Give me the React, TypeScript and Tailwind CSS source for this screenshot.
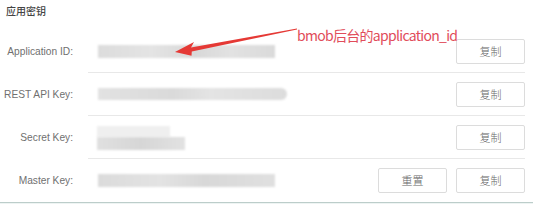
import React from "react";

const cjk = '"Noto Sans CJK SC", "Liberation Sans", sans-serif';

function Btn({ children }: { children: React.ReactNode }) {
  return (
    <button
      className="w-[69px] h-[25px] border border-[#dcdcdc] rounded-[2px] bg-white text-[11px] font-light text-[#666] leading-none flex items-center justify-center"
      style={{ fontFamily: cjk }}
    >
      {children}
    </button>
  );
}

function Row({
  label,
  bar,
  last,
  buttons,
}: {
  label: string;
  bar: React.ReactNode;
  last?: boolean;
  buttons: React.ReactNode;
}) {
  return (
    <div className="flex h-[43px]">
      <div className="w-[88px] shrink-0 flex items-center justify-end pr-[15px] text-[10.2px] text-[#707070] font-['Liberation_Sans',sans-serif]">
        {label}
      </div>
      <div
        className={
          "flex-1 mr-[8px] flex items-center " +
          (last ? "" : "border-b border-[#e8e8e8]")
        }
      >
        <div className="pl-[10px] flex-1">{bar}</div>
        <div className="flex gap-[9px]">{buttons}</div>
      </div>
    </div>
  );
}

export default function App() {
  return (
    <div className="relative w-[533px] h-[204px] bg-white overflow-hidden">
      <div
        className="h-[30px] pl-[6px] pt-[3px] text-[10px] font-medium text-[#444]"
        style={{ fontFamily: cjk }}
      >
        应用密钥
      </div>
      <Row
        label="Application ID:"
        bar={
          <div className="w-[177px] h-[13px] blur-[1px] bg-[linear-gradient(90deg,#dcdcdc_0%,#e4e4e4_30%,#d8d8d8_55%,#e2e2e2_75%,#dadada_100%)]" />
        }
        buttons={<Btn>复制</Btn>}
      />
      <Row
        label="REST API Key:"
        bar={
          <div className="w-[189px] h-[12px] rounded-r-full blur-[1px] bg-[linear-gradient(90deg,#e2e2e2_0%,#dadada_40%,#e4e4e4_60%,#dcdcdc_100%)]" />
        }
        buttons={<Btn>复制</Btn>}
      />
      <Row
        label="Secret Key:"
        bar={
          <div className="flex flex-col -ml-[1px] pt-[2px]">
            <div className="w-[73px] h-[11px] blur-[1px] bg-[#efefef]" />
            <div className="w-[88px] h-[13px] blur-[1px] bg-[linear-gradient(90deg,#e0e0e0_0%,#d6d6d6_50%,#e2e2e2_100%)]" />
          </div>
        }
        buttons={<Btn>复制</Btn>}
      />
      <Row
        label="Master Key:"
        last
        bar={
          <div className="w-[177px] h-[13px] blur-[1px] bg-[linear-gradient(90deg,#dbdbdb_0%,#e3e3e3_35%,#d8d8d8_60%,#e0e0e0_100%)]" />
        }
        buttons={
          <>
            <Btn>重置</Btn>
            <Btn>复制</Btn>
          </>
        }
      />
      <div className="h-[1px] bg-[#bccdca]" />
      <div className="h-[2px] bg-[#eef4f3]" />

      <svg
        className="absolute left-0 top-0 pointer-events-none"
        width="533"
        height="204"
        viewBox="0 0 533 204"
      >
        <polygon
          points="175,52 194,42 191,47.6 297,28.4 297,29.6 191.8,51.6 191.5,55.8"
          fill="#e53935"
        />
      </svg>
      <div
        className="absolute left-[297px] top-[25px] text-[14px] tracking-[-0.7px] leading-[20px] text-[#e14c5a] whitespace-nowrap"
        style={{ fontFamily: cjk }}
      >
        bmob后台的application_id
      </div>
    </div>
  );
}
